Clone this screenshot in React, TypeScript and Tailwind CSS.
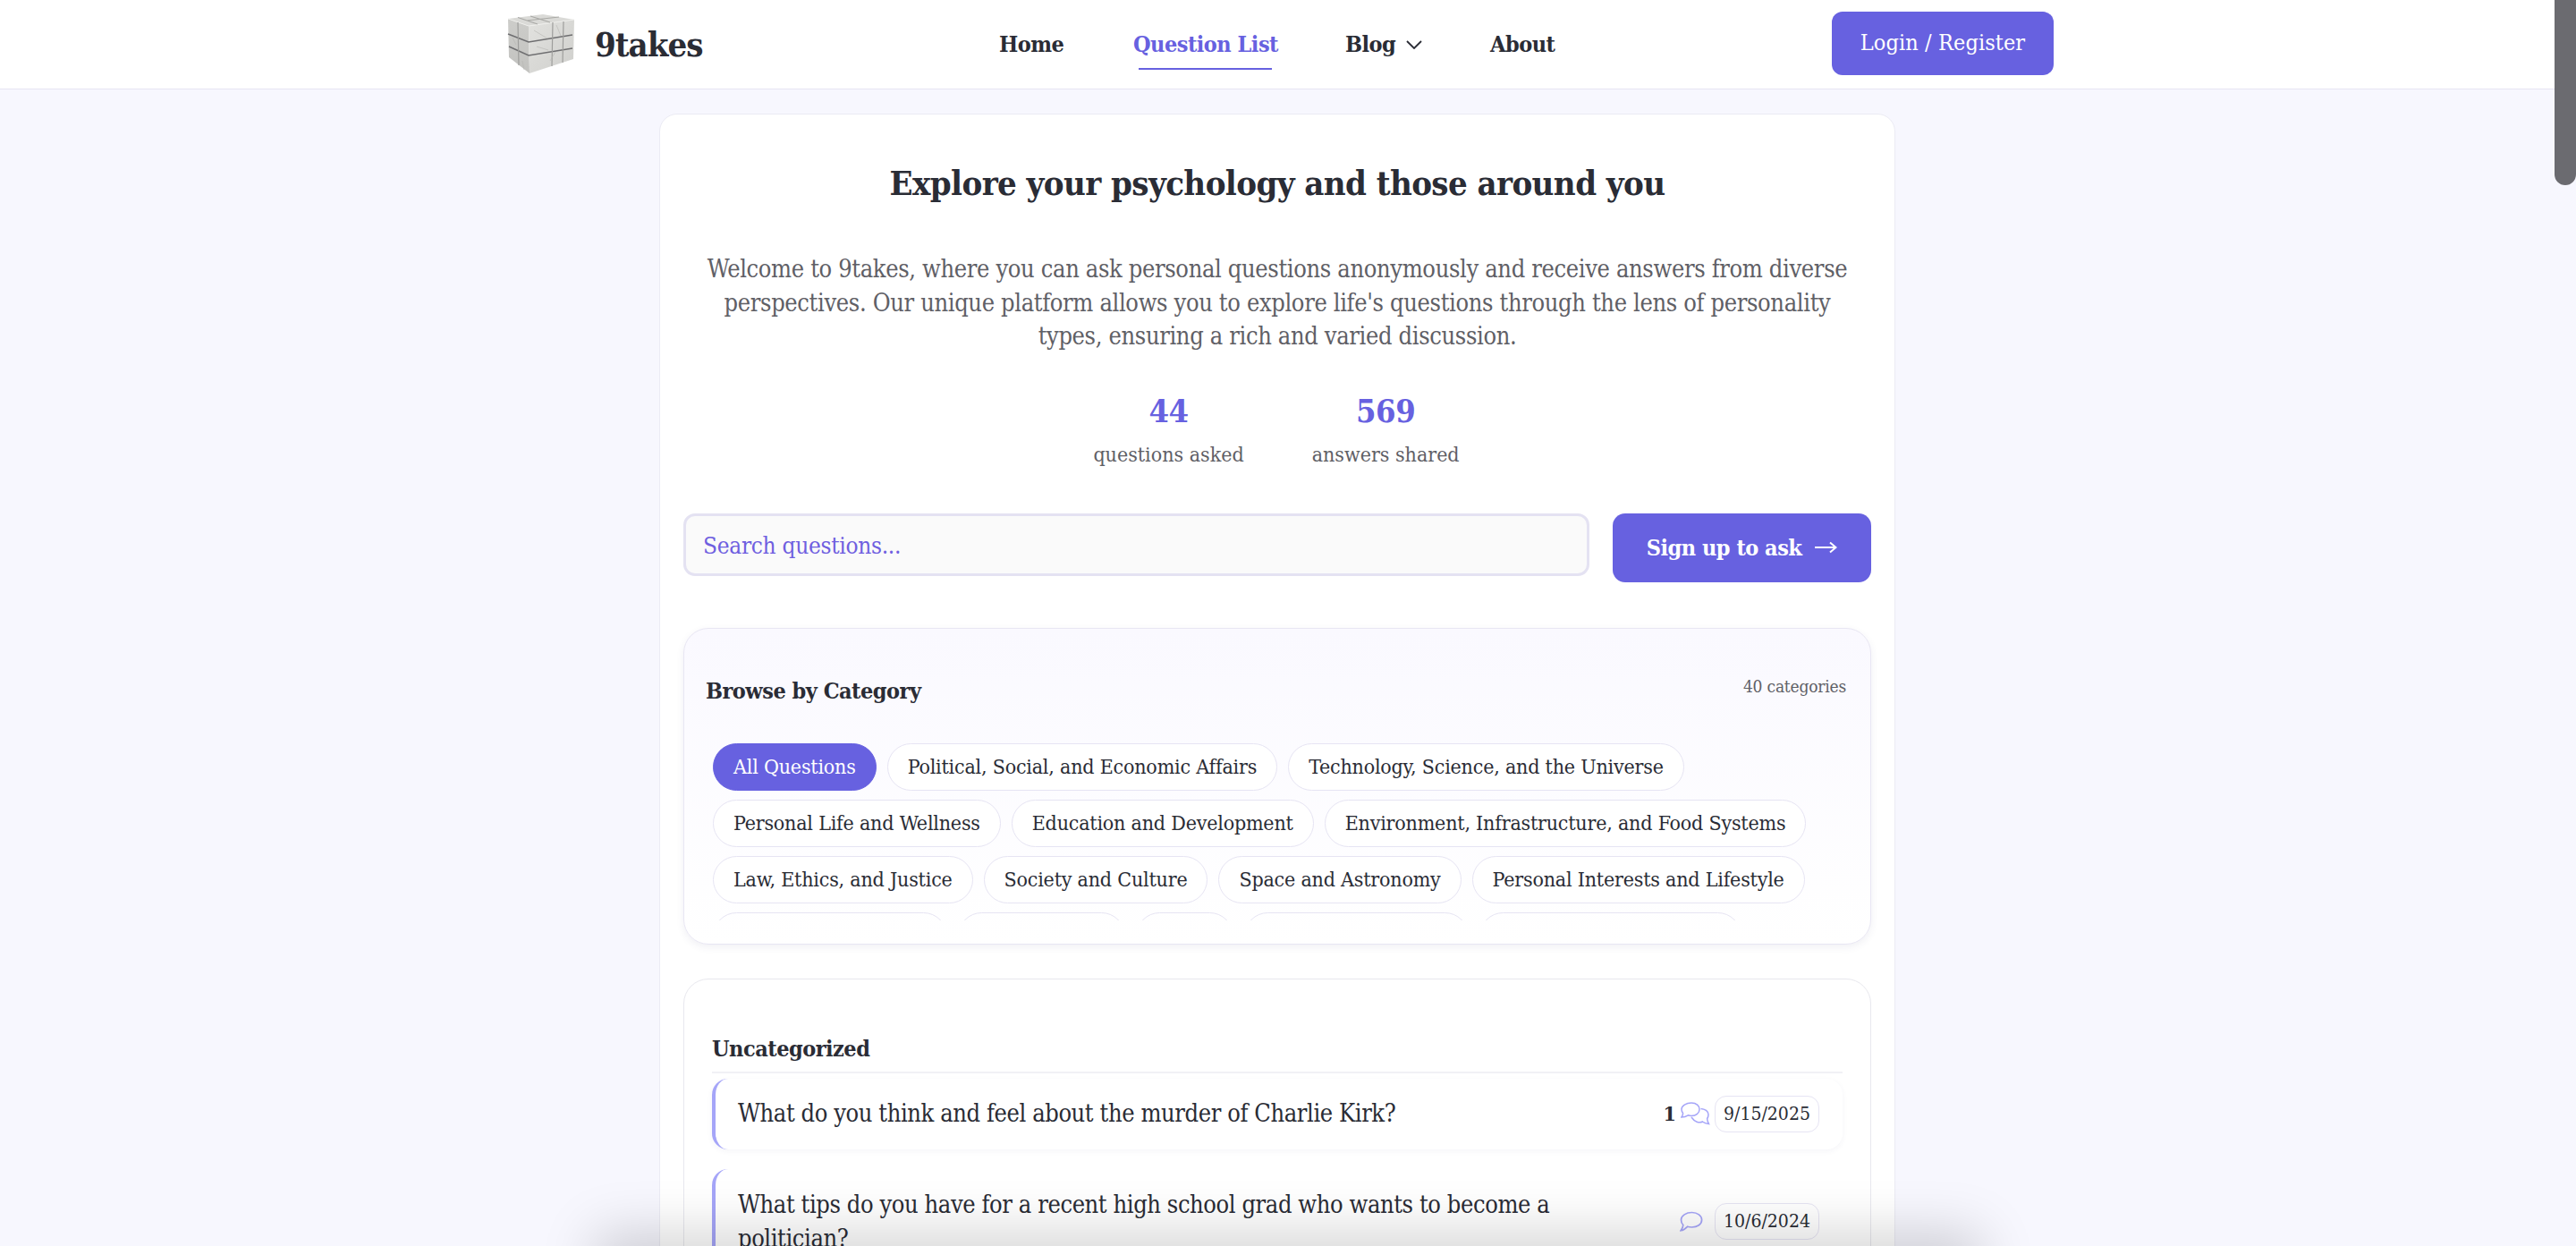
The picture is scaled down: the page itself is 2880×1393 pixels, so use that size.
const S = "font-['DejaVu_Serif_Condensed','DejaVu_Serif',serif]";
function Cube() {
  return (
    <svg width="76" height="68" viewBox="0 0 76 68" className="ml-[1px]">
      <defs>
        <linearGradient id="rf" x1="0" y1="0" x2="1" y2="1"><stop offset="0" stopColor="#e2e2df" /><stop offset="1" stopColor="#cfcfcc" /></linearGradient>
        <linearGradient id="lf" x1="0" y1="0" x2="0" y2="1"><stop offset="0" stopColor="#cdcdca" /><stop offset="1" stopColor="#c2c2bf" /></linearGradient>
      </defs>
      <polygon points="1,5 40,0 75,6 24,13" fill="#dadad7" />
      <polygon points="1,5 24,13 25,66 2,48" fill="url(#lf)" />
      <polygon points="24,13 75,6 74,50 25,66" fill="url(#rf)" />
      <path d="M1 5L24 13L75 6" stroke="#efefec" strokeWidth="1" fill="none" />
      <path d="M12 3.5L34 11M26 2L48 9M22 7L58 3" stroke="#a9a9a6" strokeWidth="1.2" fill="none" />
      <path d="M1 22L24 31L73 23M2 36L24 46L73 38" stroke="#6e6e70" strokeWidth="1.5" fill="none" />
      <path d="M12 9L13 57M51 9L50 58M63 8L62 54" stroke="#9e9e9c" strokeWidth="1.2" fill="none" />
      <path d="M30 18L45 27M55 12L60 24M6 26L10 34M33 36L46 40M17 52L19 62M54 42L48 52" stroke="#b5b5b2" strokeWidth=".6" fill="none" />
    </svg>
  );
}
function Pill({ children, active }: { children?: React.ReactNode; active?: boolean }) {
  return (
    <div className={`h-[53px] flex items-center rounded-[27px] px-[22px] text-[23px] tracking-[-0.2px] whitespace-nowrap border ${active ? "bg-[#6761e0] text-white border-[#6761e0]" : "bg-white text-[#2a2c35] border-[#e6e4f3]"}`}>
      {children}
    </div>
  );
}
function Single() {
  return (
    <svg width="26" height="24" viewBox="0 0 26 24" fill="none" stroke="#a5a5f8" strokeWidth="1.7">
      <path d="M13.5 1.5C19.7 1.5 24.6 5 24.6 9.8 24.6 14.6 19.7 18 13.5 18 11.7 18 10 17.8 8.6 17.3 6.5 19.5 3.8 21.4 1.2 21.7 2.6 20 3.6 18 3.8 15.5 2.3 14 1.5 12 1.5 9.8 1.5 5 7.3 1.5 13.5 1.5Z" />
    </svg>
  );
}
function Double() {
  return (
    <svg width="33" height="26" viewBox="0 0 33 26" fill="none" stroke="#a5a5f8" strokeWidth="1.5">
      <path d="M12 1C17.6 1 21 4.2 21 8.2 21 12.3 17.4 15.4 12 15.4 10.6 15.4 9.5 15.2 8.4 14.8 6.6 16 3.8 17 .9 17 1.9 15.6 2.5 14.2 2.6 12.6 1.6 11.3 1 9.8 1 8.2 1 4.2 6.2 1 12 1Z" />
      <path d="M22.5 7.5C27 7.8 31 10.2 31 14 31 16.2 30.5 17.5 29.6 18.8 29.7 20.5 30.4 22.5 31.5 24.5 28.5 24.2 26.2 23.4 24.4 22 20.6 24 15.5 22.2 12 17" />
    </svg>
  );
}
function Blank({ w }: { w: string }) {
  return <div className={`${w} h-[53px] rounded-[27px] border border-[#e6e4f3]`} />;
}
export default function App() {
  return (
    <div className={`relative w-[2880px] h-[1393px] overflow-hidden bg-[#f7f7fe] text-[#2a2c35] ${S}`}>
      <header className="h-[100px] bg-white border-b border-[#e6e4f3] flex items-center pl-[566px]">
        <Cube />
        <span className="ml-[22px] w-[120px] text-[38px] tracking-[-1px] font-bold text-[#2a2c35]">9takes</span>
        <nav className="ml-[332px] flex items-center h-full text-[25px] font-semibold tracking-[-0.5px]">
          <a className="w-[150px]">Home</a>
          <a className="relative w-[237px] text-[#6761e0]">Question List
            <span className="absolute left-[6px] top-[45px] w-[149px] h-[2px] bg-[#6761e0]" />
          </a>
          <a className="w-[162px] flex items-center gap-3">Blog
            <svg width="18" height="10" viewBox="0 0 18 10" fill="none" stroke="#2a2c35" strokeWidth="1.8"><path d="M1 1l8 8 8-8" /></svg>
          </a>
          <a className="w-[382px]">About</a>
        </nav>
        <button className="w-[248px] h-[71px] -mt-[3px] rounded-[12px] bg-[#6761e0] text-white text-[25px] tracking-[0.1px]">Login / Register</button>
      </header>
      <main className="w-[1382px] ml-[737px] mt-[27px] bg-white rounded-[20px] border border-[#ebebf4] px-[26px] h-[1400px]">
        <h1 className="text-center text-[38px] tracking-[-0.6px] font-bold mt-[52px] leading-[50px]">Explore your psychology and those around you</h1>
        <p className="mt-[52px] mx-auto w-[1290px] text-center text-[27px] tracking-[-0.35px] leading-[37.6px] text-[#5f6066]">Welcome to 9takes, where you can ask personal questions anonymously and receive answers from diverse perspectives. Our unique platform allows you to explore life's questions through the lens of personality types, ensuring a rich and varied discussion.</p>
        <div className="flex justify-center gap-[76px] mt-[39px] pr-[2px]">
          <div className="text-center"><div className="text-[36px] tracking-[-0.5px] leading-[50px] font-bold text-[#6761e0]">44</div><div className="mt-[6px] text-[23px] leading-[36px] text-[#5f6066]">questions asked</div></div>
          <div className="text-center"><div className="text-[36px] tracking-[-0.5px] leading-[50px] font-bold text-[#6761e0]">569</div><div className="mt-[6px] text-[23px] leading-[36px] text-[#5f6066]">answers shared</div></div>
        </div>
        <div className="flex items-start gap-[26px] mt-[48px]">
          <div className="w-[1014px] h-[70px] flex items-center rounded-[13px] border-[3px] border-[#e4e2f2] bg-[#fafafa] pl-[19px] pt-[3px] text-[26px] tracking-[-0.3px] text-[#6f5fe0]">Search questions...</div>
          <button className="w-[289px] h-[77px] rounded-[14px] bg-[#6761e0] text-white text-[25px] tracking-[-0.5px] font-bold flex items-center justify-center gap-[14px]">Sign up to ask
            <svg width="26" height="14" viewBox="0 0 26 14" fill="none" stroke="#fff" strokeWidth="2"><path d="M1 7H24M18 1.5L24.5 7 18 12.5" /></svg>
          </button>
        </div>
        <section className="relative mt-[51px] h-[354px] rounded-[28px] border border-[#e8e6f3] bg-gradient-to-b from-[#faf9ff] to-white shadow-[0_3px_8px_rgba(60,60,120,0.08)] px-[32px] overflow-hidden">
          <div className="flex justify-between items-start pt-[50px] -ml-[8px] -mr-[5px]">
            <h2 className="text-[25px] tracking-[-0.5px] leading-[40px] font-semibold">Browse by Category</h2>
            <span className="text-[19px] tracking-[-0.2px] leading-[28px] text-[#5f6066]">40 categories</span>
          </div>
          <div className="h-[198px] mt-[38px] overflow-hidden">
            <div className="flex flex-wrap gap-x-[12px] gap-y-[10px]">
              <Pill active>All Questions</Pill>
              <Pill>Political, Social, and Economic Affairs</Pill>
              <Pill>Technology, Science, and the Universe</Pill>
              <Pill>Personal Life and Wellness</Pill>
              <Pill>Education and Development</Pill>
              <Pill>Environment, Infrastructure, and Food Systems</Pill>
              <Pill>Law, Ethics, and Justice</Pill>
              <Pill>Society and Culture</Pill>
              <Pill>Space and Astronomy</Pill>
              <Pill>Personal Interests and Lifestyle</Pill>
              <Blank w="w-[262px]" />
              <Blank w="w-[187px]" />
              <Blank w="w-[109px]" />
              <Blank w="w-[251px]" />
              <Blank w="w-[293px]" />
            </div>
          </div>
        </section>
        <section className="mt-[38px] h-[600px] rounded-[28px] border border-[#e8e8ee] px-[31px]">
          <h2 className="mt-[58px] text-[25px] tracking-[-0.5px] leading-[40px] font-semibold">Uncategorized</h2>
          <div className="mt-[5px] border-t-2 border-[#f1f1f5]" />
          <div className="mt-[6px] h-[79px] flex items-center rounded-[18px] border-l-[4px] border-[#a5a5f8] bg-white shadow-[0_2px_6px_rgba(60,60,120,0.05)] pl-[25px] pr-[26px]">
            <span className="text-[27px] tracking-[-0.4px] flex-1">What do you think and feel about the murder of Charlie Kirk?</span>
            <span className="font-bold text-[23px] mr-[5px]">1</span>
            <Double />
            <span className="ml-[5px] w-[117px] h-[41px] flex items-center justify-center rounded-[13px] border border-[#e6e4f3] text-[21px]">9/15/2025</span>
          </div>
          <div className="mt-[22px] h-[118px] flex items-center rounded-[18px] border-l-[4px] border-[#a5a5f8] bg-white pl-[25px] pr-[26px]">
            <span className="text-[27px] tracking-[-0.4px] leading-[38px] w-[930px]">What tips do you have for a recent high school grad who wants to become a politician?</span>
            <span className="ml-auto"><Single /></span>
            <span className="ml-[13px] w-[117px] h-[41px] flex items-center justify-center rounded-[13px] border border-[#e6e4f3] text-[21px]">10/6/2024</span>
          </div>
        </section>
      </main>
      <div className="absolute left-[680px] right-[680px] -bottom-[40px] h-[40px] shadow-[0_0_60px_15px_rgba(0,0,0,0.17)]" />
      <div className="absolute right-0 top-0 w-[24px] h-[207px] rounded-b-[12px] bg-[#6b6b70]" />
    </div>
  );
}
